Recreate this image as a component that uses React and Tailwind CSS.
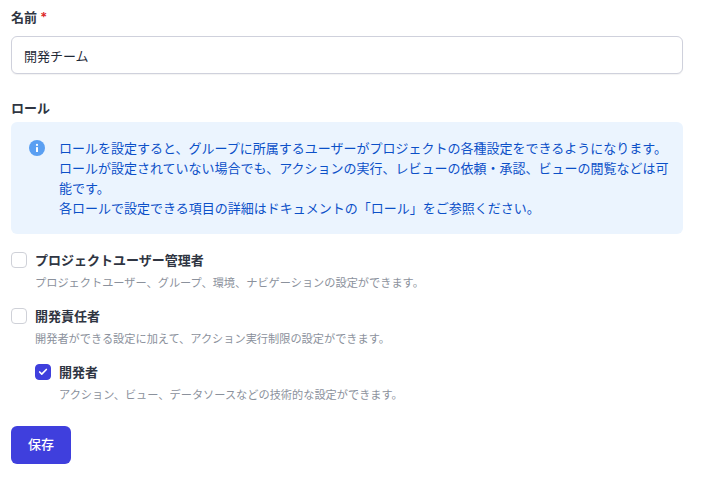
import { Check } from "lucide-react";

function RoleOption({ title, description, checked, nested }) {
  return (
    <div className={`flex items-start gap-2 ${nested ? "ml-6" : ""}`}>
      <span
        className={`mt-[1px] flex h-4 w-4 shrink-0 items-center justify-center rounded-[4px] border ${
          checked ? "border-[#3f3fdd] bg-[#3f3fdd]" : "border-[#cfd1d8] bg-white"
        }`}
      >
        {checked ? <Check size={10} strokeWidth={4} className="text-white" /> : null}
      </span>
      <div>
        <p className="text-[13px] font-semibold leading-[18px] text-[#2f3542]">{title}</p>
        <p className="mt-[6px] text-[11.2px] leading-[16px] text-[#8b919c]">{description}</p>
      </div>
    </div>
  );
}

export default function App() {
  return (
    <div className="h-[481px] w-[702px] overflow-hidden bg-white px-[11px] pt-2 font-['Inter','Noto_Sans_CJK_JP',sans-serif]">
      <div className="w-[672px]">
        <label className="block text-[13px] font-semibold leading-[18px] text-[#2f3542]">
          名前 <span className="text-[#dc2626]">*</span>
        </label>
        <input
          readOnly
          value="開発チーム"
          className="mt-[10px] block h-[38px] w-full rounded-[6px] border border-[#cfd1dc] bg-white px-3 text-[13px] text-[#1f2937] shadow-[0_1px_1px_rgba(0,0,0,0.05)] outline-none"
        />

        <p className="mt-[25px] text-[13px] font-semibold leading-[18px] text-[#2f3542]">ロール</p>
        <div className="mt-[5px] flex gap-[14px] rounded-[6px] bg-[#ebf4fe] py-4 pl-[18px] pr-3">
          <svg viewBox="0 0 16 16" className="mt-[2px] h-4 w-4 shrink-0">
            <circle cx="8" cy="8" r="8" fill="#5a9ff2" />
            <circle cx="8" cy="4.9" r="1.1" fill="#fff" />
            <rect x="7" y="7" width="2" height="5" rx="0.6" fill="#fff" />
          </svg>
          <p className="text-[13px] leading-[20px] text-[#0b50c8]">
            ロールを設定すると、グループに所属するユーザーがプロジェクトの各種設定をできるようになります。
            <br />
            ロールが設定されていない場合でも、アクションの実行、レビューの依頼・承認、ビューの閲覧などは可能です。
            <br />
            各ロールで設定できる項目の詳細はドキュメントの「ロール」をご参照ください。
          </p>
        </div>

        <div className="mt-[17px] flex flex-col gap-4">
          <RoleOption
            title="プロジェクトユーザー管理者"
            description="プロジェクトユーザー、グループ、環境、ナビゲーションの設定ができます。"
          />
          <RoleOption
            title="開発責任者"
            description="開発者ができる設定に加えて、アクション実行制限の設定ができます。"
          />
          <RoleOption
            nested
            checked
            title="開発者"
            description="アクション、ビュー、データソースなどの技術的な設定ができます。"
          />
        </div>

        <button
          type="button"
          className="mt-[23px] h-[38px] w-[60px] rounded-[6px] bg-[#3f3fdd] text-[13px] font-medium text-white"
        >
          保存
        </button>
      </div>
    </div>
  );
}
